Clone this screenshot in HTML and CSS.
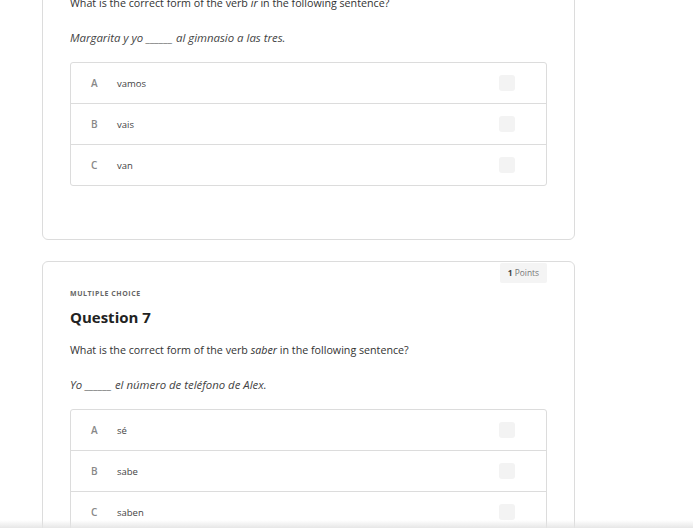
FILE: index.html
```html
<!DOCTYPE html>
<html>
<head>
<meta charset="utf-8">
<link rel="stylesheet" href="styles.css">
</head>
<body>
<div class="page">
  <div class="card">
    <div class="card-top"><span class="points"><b>1</b> Points</span></div>
    <div class="kind">MULTIPLE CHOICE</div>
    <h2 class="title">Question 6</h2>
    <p class="prompt">What is the correct form of the verb <i>ir</i> in the following sentence?</p>
    <p class="sentence">Margarita y yo ______ al gimnasio a las tres.</p>
    <div class="options">
      <div class="option"><span class="letter">A</span><span class="text">vamos</span><span class="check"></span></div>
      <div class="option"><span class="letter">B</span><span class="text">vais</span><span class="check"></span></div>
      <div class="option"><span class="letter">C</span><span class="text">van</span><span class="check"></span></div>
    </div>
  </div>
  <div class="card">
    <div class="card-top"><span class="points"><b>1</b> Points</span></div>
    <div class="kind">MULTIPLE CHOICE</div>
    <h2 class="title">Question 7</h2>
    <p class="prompt">What is the correct form of the verb <i>saber</i> in the following sentence?</p>
    <p class="sentence">Yo ______ el número de teléfono de Alex.</p>
    <div class="options">
      <div class="option"><span class="letter">A</span><span class="text">sé</span><span class="check"></span></div>
      <div class="option"><span class="letter">B</span><span class="text">sabe</span><span class="check"></span></div>
      <div class="option"><span class="letter">C</span><span class="text">saben</span><span class="check"></span></div>
    </div>
  </div>
</div>
<div class="bottom-shade"></div>
</body>
</html>
```
FILE: styles.css
```css
html, body {
  margin: 0;
  padding: 0;
  background: #ffffff;
  font-family: "Open Sans", "Liberation Sans", sans-serif;
  color: #333;
  overflow: hidden;
}
.page {
  margin-top: -86px;
  padding-left: 42px;
  width: 533px;
  display: flex;
  flex-direction: column;
  gap: 21px;
}
.card {
  border: 1px solid #dcdcdc;
  border-radius: 6px;
  padding: 0 27px 53px 27px;
}
.card-top {
  display: flex;
  justify-content: flex-end;
  padding-top: 1px;
  height: 21px;
}
.points {
  background: #f4f4f4;
  border-radius: 2px;
  font-size: 8.4px;
  color: #777;
  height: 20px;
  line-height: 20px;
  padding: 0 8px;
}
.points b {
  color: #444;
  font-weight: 700;
}
.kind {
  margin-top: 5px;
  font-size: 7px;
  font-weight: 700;
  letter-spacing: 0.55px;
  color: #666;
  line-height: 10px;
}
.title {
  margin: 8px 0 0 0;
  font-size: 15px;
  font-weight: 700;
  color: #222;
  line-height: 20px;
}
.prompt {
  margin: 15px 0 0 0;
  font-size: 10.7px;
  line-height: 16px;
  color: #333;
}
.sentence {
  margin: 19px 0 0 0;
  font-size: 11.4px;
  line-height: 16px;
  font-style: italic;
  color: #444;
}
.options {
  margin-top: 16px;
  border: 1px solid #dcdcdc;
  border-radius: 3px;
}
.option {
  display: flex;
  align-items: center;
  height: 40px;
  padding: 0 31px 0 20px;
  border-top: 1px solid #dcdcdc;
}
.option:first-child {
  border-top: none;
}
.letter {
  width: 26px;
  font-size: 10px;
  font-weight: 600;
  color: #888;
}
.text {
  flex: 1;
  font-size: 9.5px;
  color: #444;
}
.check {
  width: 16px;
  height: 16px;
  border-radius: 3px;
  background: #f3f3f3;
}
.bottom-shade {
  position: fixed;
  left: 0;
  right: 0;
  bottom: 0;
  height: 8px;
  background: linear-gradient(to bottom, rgba(235,235,235,0), rgba(228,228,228,0.9));
}
```
